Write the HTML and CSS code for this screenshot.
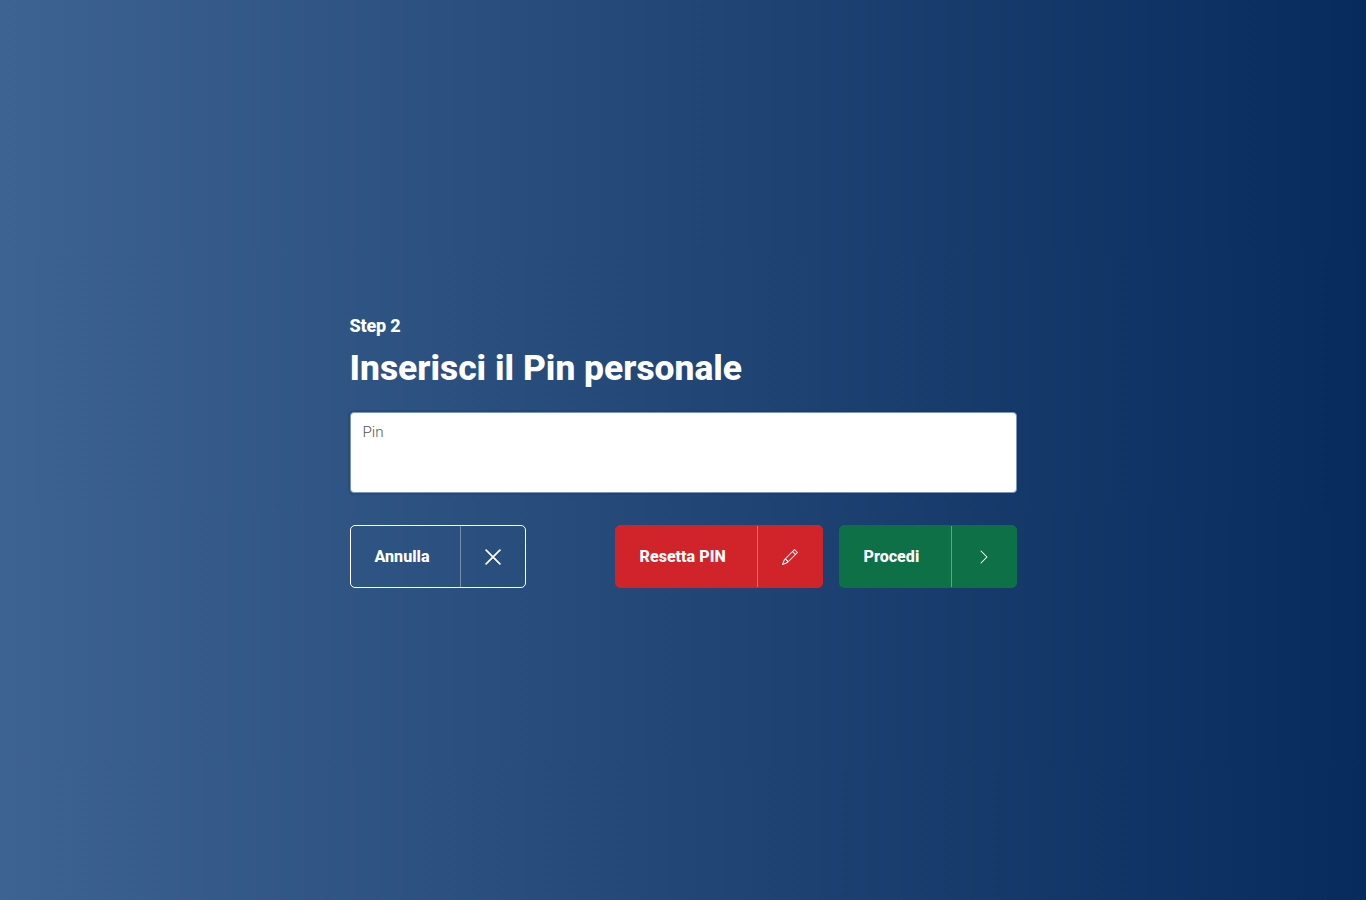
FILE: index.html
```html
<!DOCTYPE html>
<html lang="it">
<head>
<meta charset="utf-8">
<title>Inserisci il Pin personale</title>
<link rel="stylesheet" href="styles.css">
</head>
<body>
<main class="page">
  <form class="panel">
    <p class="step">Step 2</p>
    <h1 class="title">Inserisci il Pin personale</h1>
    <label class="field">
      <span class="field-label">Pin</span>
      <input class="field-input" type="password" aria-label="Pin">
    </label>
    <div class="actions">
      <button class="btn btn-outline" type="button">
        <span class="btn-text">Annulla</span>
        <span class="btn-icon">
          <svg width="20" height="20" viewBox="0 0 16 16" fill="currentColor" stroke="currentColor" stroke-width=".5"><path d="M2.146 2.854a.5.5 0 1 1 .708-.708L8 7.293l5.146-5.147a.5.5 0 0 1 .708.708L8.707 8l5.147 5.146a.5.5 0 0 1-.708.708L8 8.707l-5.146 5.147a.5.5 0 0 1-.708-.708L7.293 8z"/></svg>
        </span>
      </button>
      <div class="actions-right">
        <button class="btn btn-red" type="button">
          <span class="btn-text">Resetta PIN</span>
          <span class="btn-icon">
            <svg width="16" height="16" viewBox="0 0 16 16" fill="currentColor"><path d="M12.146.146a.5.5 0 0 1 .708 0l3 3a.5.5 0 0 1 0 .708l-10 10a.5.5 0 0 1-.168.11l-5 2a.5.5 0 0 1-.65-.65l2-5a.5.5 0 0 1 .11-.168zM11.207 2.5 13.5 4.793 14.793 3.5 12.5 1.207zm1.586 3L10.5 3.207 4 9.707V10h.5a.5.5 0 0 1 .5.5v.5h.5a.5.5 0 0 1 .5.5v.5h.293zm-9.761 5.175-.106.106-1.528 3.821 3.821-1.528.106-.106A.5.5 0 0 1 5 12.5V12h-.5a.5.5 0 0 1-.5-.5V11h-.5a.5.5 0 0 1-.468-.325"/></svg>
          </span>
        </button>
        <button class="btn btn-green" type="button">
          <span class="btn-text">Procedi</span>
          <span class="btn-icon">
            <svg width="16" height="16" viewBox="0 0 16 16" fill="currentColor"><path fill-rule="evenodd" d="M4.646 1.646a.5.5 0 0 1 .708 0l6 6a.5.5 0 0 1 0 .708l-6 6a.5.5 0 0 1-.708-.708L10.293 8 4.646 2.354a.5.5 0 0 1 0-.708"/></svg>
          </span>
        </button>
      </div>
    </div>
  </form>
</main>
</body>
</html>
```
FILE: styles.css
```css
* { box-sizing: border-box; }
html, body { margin: 0; height: 100%; }
body {
  font-family: Roboto, "Liberation Sans", sans-serif;
  color: #fff;
  background: linear-gradient(90deg, #3d6392 0%, #072b5c 100%);
}
.page {
  min-height: 900px;
  display: flex;
  justify-content: center;
  padding: 315px 0 0 0;
}
.panel { width: 667px; }
.step {
  margin: 0;
  font-size: 18px;
  font-weight: 800;
  line-height: 22px;
  letter-spacing: -.2px;
}
.title {
  margin: 9px 0 0;
  font-size: 35.4px;
  font-weight: 800;
  line-height: 44px;
}
.field {
  display: block;
  position: relative;
  margin-top: 22px;
  height: 81px;
  background: #fff;
  border: 1px solid #7b95b7;
  border-radius: 4px;
  box-shadow: 0 0 0 2px rgba(20, 50, 100, .25);
}
.field-label {
  position: absolute;
  left: 12px;
  top: 10px;
  font-size: 15.2px;
  font-weight: 300;
  line-height: 18px;
  color: #555;
}
.field-input {
  display: block;
  width: 100%;
  height: 100%;
  border: 0;
  background: transparent;
  outline: 0;
}
.actions {
  display: flex;
  justify-content: space-between;
  margin-top: 32px;
}
.actions-right { display: flex; gap: 16px; }
.btn {
  display: flex;
  align-items: stretch;
  height: 63px;
  padding: 0;
  border: 1px solid transparent;
  border-radius: 5px;
  color: #fff;
  font: 800 16.1px/24px Roboto, "Liberation Sans", sans-serif;
}
.btn-text {
  display: flex;
  align-items: center;
  padding-left: 24px;
}
.btn-icon {
  display: flex;
  align-items: center;
  justify-content: center;
  flex: 1;
  border-left: 1px solid rgba(255, 255, 255, .35);
}
.btn-outline { width: 176px; background: transparent; border-color: #fff; }
.btn-outline .btn-text { width: 109px; }
.btn-red { width: 208px; background: #d1232a; border-color: #d1232a; }
.btn-red .btn-text { width: 141px; }
.btn-green { width: 178px; background: #0e7047; border-color: #0e7047; }
.btn-green .btn-text { width: 111px; }
```
